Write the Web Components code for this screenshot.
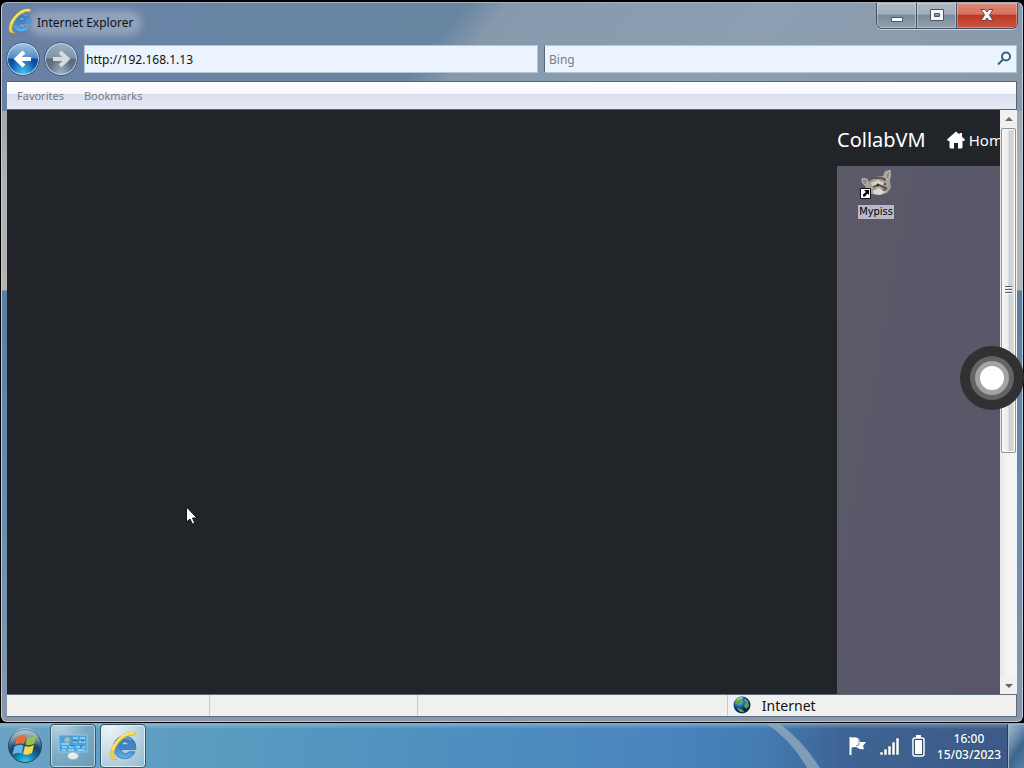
<!DOCTYPE html>
<html lang="en">
<head>
<meta charset="utf-8">
<title>Internet Explorer</title>
<style>
  html, body { height: 100%; margin: 0; }
  body { display: flex; flex-direction: column; overflow: hidden; background: #000; font: 12px/16px "Noto Sans", "Open Sans", sans-serif; color: #111; }
</style>
</head>
<body>

<aero-window>
  <title-bar>Internet Explorer</title-bar>
  <nav-bar url="http://192.168.1.13" engine="Bing"></nav-bar>
  <favorites-bar><a href="#favorites">Favorites</a><a href="#bookmarks">Bookmarks</a></favorites-bar>
  <page-view>
    <collab-page><desktop-shortcut>Mypiss</desktop-shortcut></collab-page>
  </page-view>
  <status-bar>Internet</status-bar>
</aero-window>
<task-bar time="16:00" date="15/03/2023"></task-bar>
<assist-button></assist-button>
<mouse-pointer></mouse-pointer>

<script>
const define = (name, html, setup) => {
  const template = document.createElement('template');
  template.innerHTML = html;
  customElements.define(name, class extends HTMLElement {
    connectedCallback() {
      if (this.shadowRoot) return;
      this.attachShadow({ mode: 'open' }).appendChild(template.content.cloneNode(true));
      if (setup) setup(this, this.shadowRoot);
    }
  });
};

define('ie-logo', `
<style>
  :host { display: block; width: 24px; height: 24px; }
  svg { display: block; width: 100%; height: 100%; }
</style>
<svg viewBox="1 1 26 26" aria-hidden="true">
  <defs><linearGradient id="e" x1="0" y1="0" x2="0" y2="1"><stop offset="0" stop-color="#3d79bd"/><stop offset=".5" stop-color="#4185c9"/><stop offset="1" stop-color="#62b6ec"/></linearGradient></defs>
  <circle cx="15.500" cy="15" r="8" fill="#9cc4e4" opacity=".55"/>
  <path d="M25 17H12.500q.3 3.500 3.500 3.500 2.200 0 3.200-1.500h5.200A9.800 9.800 0 1 1 25 17ZM12.600 13h6.200q-.5-2.600-3-2.600T12.600 13Z" fill="url(#e)" stroke="#3a6da6" stroke-width=".7"/>
  <path d="M9 8.500Q15 5 21 8.500" fill="none" stroke="#a5d1ef" stroke-width="1" opacity=".6"/>
  <path d="M25 2.500C17-.5 6 8.500 3.500 18c-1.600 6 .4 9 5.300 7.500C5 25 5.500 20.500 7.200 16.500 10.500 9 18 3.500 24 4.700Z" fill="#f0d443" stroke="#cdb138" stroke-width=".5"/>
  <path d="M23 2.800C15 2 7 10 5 17" fill="none" stroke="#fff5a0" stroke-width="1"/>
</svg>`);

define('aero-window', `
<style>
  :host {
    flex: 1; min-height: 0; box-sizing: border-box; display: flex; flex-direction: column;
    margin: 2px 1px 1px; padding: 0 5px 4px; border: 1px solid #bccbd8; border-top-color: #a4b1bc; border-radius: 6px;
    background:
      linear-gradient(128deg, #6b7fa5 0, #6885a5 22%, #6885a2 42%, #8799ad 46%, #8c9eb2 70%, #8999aa 100%) 0 0 / 100% 108px no-repeat,
      linear-gradient(#8a97a5 0, #aeb2b5 180px, #b5b4b1 287px, #587d9e 288px, #6a8eaf 520px, #8997a9 100%);
  }
</style>
<slot></slot>`);

define('title-bar', `
<style>
  :host { flex: none; display: flex; height: 39px; }
  .caption { flex: 1; display: flex; align-items: center; height: 40px; gap: 4px; }
  ie-logo { width: 26px; height: 26px; margin-bottom: 4px; }
  .title { padding: 0 4px; margin-left: -4px; border-radius: 8px; background: rgba(255,255,255,.25); box-shadow: 0 0 8px 4px rgba(255,255,255,.3); }
  .controls { display: flex; height: 26px; margin-right: -1px; box-sizing: border-box; border: 1px solid #46525f; border-top: 0; border-radius: 0 0 6px 6px; overflow: hidden; box-shadow: 0 1px 0 #cad3da; }
  button { display: flex; align-items: center; justify-content: center; width: 40px; padding: 0; border: 0; border-right: 1px solid #46525f; background: linear-gradient(#afb9c3 0, #a1adb9 45%, #7a8998 48%, #94a3b0 100%); box-shadow: inset 0 0 0 1px rgba(255,255,255,.3); }
  button.close { width: 60px; border-right: 0; background: linear-gradient(#de8878 0, #d9705f 45%, #bd3724 48%, #cb5541 100%); }
  svg { display: block; width: 16px; height: 14px; margin-bottom: 2px; }
</style>
<div class="caption"><ie-logo></ie-logo><span class="title"><slot></slot></span></div>
<div class="controls">
  <button aria-label="Minimize"><svg viewBox="0 0 16 14"><path d="M2.500 9.500h11v4h-11z" fill="#fff" stroke="#4c5965"/></svg></button>
  <button aria-label="Maximize"><svg viewBox="0 0 16 14"><path d="M1.500 1.500h13v11h-13zM5.500 5.500v3h5v-3z" fill="#f4f6f8" fill-rule="evenodd" stroke="#4c5965"/></svg></button>
  <button class="close" aria-label="Close"><svg viewBox="0 0 16 14"><path d="M2 1.500h4l2 2.500 2-2.500h4L10.500 7l3.500 5.500h-4L8 10l-2 2.500H2L5.500 7z" fill="#f4f6f8" stroke="#624b50"/></svg></button>
</div>`);

define('nav-bar', `
<style>
  :host { flex: none; display: flex; align-items: center; height: 34px; padding-bottom: 5px; }
  .arrows { display: flex; align-items: center; gap: 4px; margin: 0 6px 0 -1px; }
  .arrows button { width: 34px; height: 34px; padding: 0; border: 1px solid #41617d; border-radius: 50%; box-shadow: inset 0 0 0 1px rgba(220,238,250,.75); }
  .back { background: radial-gradient(ellipse at 50% 110%, #52d0fb 0, transparent 55%), linear-gradient(#a7c4e1 0, #4e8bc7 47%, #0b489c 50%, #1267b9 100%); }
  .forward { background: radial-gradient(ellipse at 50% 110%, #a5b8c6 0, transparent 50%), linear-gradient(#9cb0c2 0, #8092a4 47%, #566b80 50%, #6b7d90 100%); }
  svg { display: block; margin: auto; }
  .address, .search { box-sizing: border-box; height: 28px; border: 1px solid #b6c6d5; background: #ebf4fe; }
  .address { flex: 454; min-width: 0; }
  .search { flex: 473; min-width: 0; display: flex; align-items: center; margin-left: 6px; border-left-color: #56687a; }
  input { box-sizing: border-box; width: 100%; height: 26px; min-width: 0; padding: 0 1px; border: 0; outline: 0; background: none; font: inherit; color: #111; }
  .search input { flex: 1; padding-left: 4px; }
  input::placeholder { color: #777e88; opacity: 1; }
  .search button { width: 24px; height: 24px; padding: 0; border: 0; background: none; }
</style>
<div class="arrows">
  <button class="back" aria-label="Back"><svg width="22" height="20" viewBox="0 0 22 20"><path d="M12 3 4.500 10 12 17M5 10h14" fill="none" stroke="#fff" stroke-width="4"/></svg></button>
  <button class="forward" aria-label="Forward"><svg width="22" height="20" viewBox="0 0 22 20"><path d="m10 3 7.500 7-7.500 7M17 10H3" fill="none" stroke="#d8dbde" stroke-width="4"/></svg></button>
</div>
<div class="address"><input class="url" type="text" aria-label="Address"></div>
<div class="search">
  <input class="query" type="text" aria-label="Search">
  <button aria-label="Search"><svg width="16" height="16" viewBox="0 0 16 16"><circle cx="10" cy="5.500" r="4" fill="#f5fbff" stroke="#34657f" stroke-width="2"/><path d="m7 8.500-5 5" stroke="#34657f" stroke-width="2"/></svg></button>
</div>`, (host, root) => {
  root.querySelector('.url').value = host.getAttribute('url');
  root.querySelector('.query').placeholder = host.getAttribute('engine');
});

define('favorites-bar', `
<style>
  :host { flex: none; display: flex; align-items: center; gap: 20px; box-sizing: border-box; height: 29px; padding: 0 10px; border: 1px solid #536576; border-left: 0; background: linear-gradient(#fff 0, #f8f8ff 42%, #dce0ee 46%, #e6e8f5 100%); font-size: 11px; }
  ::slotted(a) { color: #777b84; text-decoration: none; }
</style>
<slot></slot>`);

define('scroll-bar', `
<style>
  :host { flex: none; display: flex; flex-direction: column; width: 17px; background: #f2f2f2; }
  button { flex: none; height: 17px; padding: 0; border: 0; background: #f0f0f0; }
  svg { display: block; margin: auto; }
  .track { flex: 1; display: flex; flex-direction: column; background: linear-gradient(90deg, #e6e6e6, #f4f4f4 40%); }
  .thumb { height: 59%; display: flex; align-items: center; justify-content: center; box-sizing: border-box; margin: 1px 1px 0; border: 1px solid #929292; border-radius: 2px; background: linear-gradient(90deg, #f7f7f7 0, #ececec 45%, #cdcfd0 55%, #dcdedf 100%); box-shadow: inset 0 0 0 1px #fbfbfb; }
</style>
<button aria-label="Scroll up"><svg width="8" height="4"><path d="M0 4 4 0l4 4z" fill="#666"/></svg></button>
<div class="track"><div class="thumb"><svg width="7" height="8"><path d="M0 .5h7m-7 3h7m-7 3h7" stroke="#595959"/><path d="M0 1.500h7m-7 3h7m-7 3h7" stroke="#fff"/></svg></div></div>
<button aria-label="Scroll down"><svg width="8" height="4"><path d="m0 0 4 4 4-4z" fill="#666"/></svg></button>`);

define('page-view', `
<style>
  :host { flex: 1; min-height: 0; display: flex; background: #212529; }
  .page { flex: 1; min-width: 0; display: flex; justify-content: flex-end; overflow: hidden; }
</style>
<div class="page"><slot></slot></div>
<scroll-bar></scroll-bar>`);

define('collab-page', `
<style>
  :host { flex: none; display: flex; flex-direction: column; width: 163px; overflow: hidden; color: #fff; }
  nav { flex: none; display: flex; align-items: center; gap: 21px; box-sizing: border-box; height: 56px; padding-top: 4px; white-space: nowrap; }
  a { color: inherit; text-decoration: none; }
  .brand { font-size: 20px; line-height: 30px; }
  .home { display: flex; align-items: center; gap: 4px; font-size: 15px; line-height: 24px; }
  svg { flex: none; display: block; }
  .screen { flex: 1; min-height: 0; padding: 4px 19px; background: linear-gradient(100deg, #5c5a67, #595869 50%, #5a5567); }
</style>
<nav>
  <a class="brand" href="#collabvm">CollabVM</a>
  <a class="home" href="#home"><svg width="18" height="18" viewBox="0 0 18 18" aria-hidden="true"><path d="M9 .5 0 8.500l1 1.500h1.500v6q0 1.500 1.500 1.500h3V12h4v5.500h3q1.500 0 1.500-1.500v-6H17l1-1.500-3-2.700V2h-2.500v1.600z" fill="#fff"/></svg>Home</a>
</nav>
<div class="screen"><slot></slot></div>`);

define('desktop-shortcut', `
<style>
  :host { display: flex; flex-direction: column; align-items: center; width: 40px; }
  svg { display: block; }
  span { margin-top: 3px; padding: 0 1px; background: #b9b9ca; color: #000; font: 11px/14px "DejaVu Sans Condensed", "DejaVu Sans", sans-serif; }
</style>
<svg width="32" height="32" viewBox="0 0 32 32" aria-hidden="true">
  <path d="M3 10q3-3 6 0l6-3 8-1 2-5 5-1 1 5-1 6 1 7-4 5-7 2-9-1-5-5z" fill="#a4a09a"/>
  <path d="m11 13 7-3 6 3-3 4-8 1z" fill="#d6cfc4"/>
  <path d="m8 11 5-3 8 0 5 2M13 17l6-2 7 3M22 21l5-3" fill="none" stroke="#59564f" stroke-width="2"/>
  <path d="M2 9q4-2 6 2l-2 4Q2 15 2 9ZM25 5l5-5v6l-3 4z" fill="#8f8b85" stroke="#c6c2ba"/>
  <path d="m13 21 6-3 6 4-5 3-6-1z" fill="#dfd9d0"/><circle cx="18" cy="15" r="1.500" fill="#38342f"/><circle cx="25" cy="14" r="1" fill="#38342f"/>
  <path d="M.5 18.500h10v10H.5z" fill="#fff" stroke="#111"/>
  <path d="M3 26.500v-2l3-2.500-2-2h5v5l-1.500-1.500-2.500 3z" fill="#000"/>
</svg>
<span><slot></slot></span>`);

define('status-bar', `
<style>
  :host { flex: none; display: flex; box-sizing: border-box; height: 23px; border: 1px solid #5c6b7d; border-left: 0; background: #f0f0ee; }
  div { box-sizing: border-box; border-right: 1px solid #c9c9c9; }
  .a { flex: 203; } .b { flex: 207; } .c { flex: 310; }
  .zone { flex: 284; display: flex; align-items: center; gap: 11px; padding-left: 5px; border: 0; font-size: 14px; line-height: 20px; }
  svg { display: block; margin-bottom: 2px; }
</style>
<div class="a"></div><div class="b"></div><div class="c"></div>
<div class="zone">
  <svg width="18" height="18" viewBox="0 0 18 18" aria-hidden="true">
    <defs><radialGradient id="g" cx=".35" cy=".3"><stop offset="0" stop-color="#8cd2f5"/><stop offset=".5" stop-color="#2672cb"/><stop offset="1" stop-color="#08245f"/></radialGradient></defs>
    <circle cx="9" cy="9" r="8.500" fill="url(#g)"/>
    <path d="M3 3q4-3 6-2L7 4l2 2-4 3-3-2zM12 7l3-1 1 4-3 3-2-3zM12 2l4 4-2 1-3-2zM4 12l5 1 2 3q-5 1-7-4Z" fill="#56a83f"/>
    <path d="M4 4q3-3 6-2" stroke="#d9f5e7" fill="none"/>
  </svg>
  <span><slot></slot></span>
</div>`);

define('task-bar', `
<style>
  :host {
    flex: none; display: flex; align-items: stretch; box-sizing: border-box; height: 45px; padding-left: 5px; border-top: 1px solid #85a7bd; color: #fff;
    background:
      linear-gradient(rgba(255,255,255,.25), transparent 5px),
      linear-gradient(90deg, #6aa3c4 0, #5799bf 25%, #4d8dc0 48%, #4a84bd 65%, #437bb2 75%, #3e6494 82%, #3c5986 100%);
  }
  button { padding: 0; border: 0; background: none; }
  .start { width: 40px; }
  .tasks { display: flex; gap: 4px; margin-left: 5px; }
  .tasks button { display: flex; align-items: center; justify-content: center; width: 46px; border: 1px solid #31566e; border-radius: 4px; background: radial-gradient(ellipse at 20% 0, #bcd3df 0, #7eacc6 50%, #6798b7 100%); box-shadow: inset 0 0 0 1px rgba(230,243,250,.65); }
  .tasks button.active { background: radial-gradient(ellipse at 20% 0, #eff6f8 0, #bfd6e2 55%, #91b8ce 100%); box-shadow: inset 0 0 0 1px #e1eff6; }
  ie-logo { width: 30px; height: 30px; }
  svg { display: block; margin: auto; }
  .streak { flex: 1; display: flex; justify-content: flex-end; min-width: 0; overflow: hidden; }
  .streak svg { margin: 0 26px 0 0; }
  .tray { display: flex; align-items: center; gap: 12px; }
  .tray svg { margin: 0; }
  .clock { text-align: center; font-size: 12px; line-height: 16px; font-weight: 500; margin-top: 2px; text-shadow: 0 0 2px #27496f; }
  .show { width: 17px; margin-left: 6px; border-left: 1px solid #273f5b; background: linear-gradient(125deg, #a8bccd 0, #6f90b1 35%, #3e658f 60%, #587fa6 100%); box-shadow: inset 1px 1px 0 #9db4c8; }
</style>
<button class="start" aria-label="Start">
  <svg width="36" height="36" viewBox="0 0 36 36">
    <defs>
      <radialGradient id="orb" cx=".5" cy="1" r=".9"><stop offset="0" stop-color="#38d4ee"/><stop offset=".35" stop-color="#147aa9"/><stop offset=".62" stop-color="#174366"/><stop offset="1" stop-color="#819bb0"/></radialGradient>
      <linearGradient id="gloss" x1="0" y1="0" x2="0" y2="1"><stop offset="0" stop-color="#fff" stop-opacity=".7"/><stop offset="1" stop-color="#fff" stop-opacity=".05"/></linearGradient>
    </defs>
    <circle cx="18" cy="18" r="16.500" fill="url(#orb)" stroke="#214d69"/>
    <path d="M3 15A15 15 0 0 1 33 15Q18 20 3 15Z" fill="url(#gloss)" opacity=".55"/>
    <path d="M10 9q5-3 9-1l-2 8q-4-2-9 1z" fill="#ea6b38"/><path d="M20.500 8.500q4 2 9-1l-2 8q-5 3-9 1z" fill="#95c343"/>
    <path d="M7.500 18.500q5-3 9-1l-2 8q-4-2-9 1z" fill="#69b6ea"/><path d="M18 18q4 2 9-1l-2 8q-5 3-9 1z" fill="#fbd64d"/>
  </svg>
</button>
<div class="tasks">
  <button aria-label="Control Panel"><svg width="32" height="30" viewBox="0 0 32 30">
    <path d="M2 4h28v17H2z" fill="#4aa2dd" stroke="#8dcbed"/>
    <circle cx="10" cy="9" r="3" fill="#6eb6e8"/><path d="M10 9V6a3 3 0 0 1 3 3z" fill="#f1ad42"/><circle cx="10" cy="9" r="1.500" fill="#e9b84f"/>
    <path d="M16 7h5m2 0h5M16 11h4m2 0h6M5 16h5m2 0h5m2 0h4m2 0h3M5 19h4m2 0h6m3 0h8M4 13h8" stroke="#a4d9f5" stroke-width="1.500"/>
    <path d="M16 10h4m4 0h3M14 15h3m6 0h3" stroke="#286ea9"/>
    <ellipse cx="16" cy="25" rx="5.500" ry="3.500" fill="#e6ebee" stroke="#9bb2c1" stroke-width=".6"/><path d="M12 25q2-3 5-3" stroke="#fff" fill="none"/>
  </svg></button>
  <button class="active" aria-label="Internet Explorer"><ie-logo></ie-logo></button>
</div>
<div class="streak"><svg width="55" height="44" viewBox="0 0 55 44" aria-hidden="true"><path d="M0 0Q25 17 40 44h13Q36 17 13 0z" fill="#8fa9bb" opacity=".8"/></svg></div>
<div class="tray">
  <svg width="20" height="20" viewBox="0 0 20 20"><path d="M2.500 1v18" stroke="#fff" stroke-width="2"/><path d="M3 2q5-2 8 1 1 1 1 3l6 0-3 4 1 3q-4 1-6-1-3-2-7 0z" fill="#fff"/><path d="M11 3v6l-3 1" fill="none" stroke="#7891aa"/></svg>
  <svg width="20" height="18" viewBox="0 0 20 18"><path d="M0 15h3v3H0zM4 12h3v6H4zM8 9h3v9H8zM12 5h3v13h-3zM16 1h3v17h-3z" fill="#fff" stroke="#2b5277" stroke-width=".5"/></svg>
  <svg width="13" height="22" viewBox="0 0 13 22"><path d="M4 0h5v3H4z" fill="#fff"/><rect x="1" y="3" width="11" height="18" rx="2" fill="#35516d" stroke="#fff" stroke-width="1.500"/><path d="M3 5h7v14H3z" fill="#fff"/></svg>
  <div class="clock"><div class="time"></div><div class="date"></div></div>
</div>
<button class="show" aria-label="Show desktop"></button>`, (host, root) => {
  root.querySelector('.time').textContent = host.getAttribute('time');
  root.querySelector('.date').textContent = host.getAttribute('date');
});

// floats above the window, docked to the right edge
define('assist-button', `
<style>
  :host { position: absolute; right: 0; top: 346px; }
  button { display: flex; align-items: center; justify-content: center; width: 64px; height: 64px; padding: 0; border: 0; border-radius: 50%; background: #303132; }
  span { width: 24px; height: 24px; border-radius: 50%; background: #fff; box-shadow: 0 0 0 5px #a3a3a3, 0 0 0 10px #646464; }
</style>
<button aria-label="Assistive touch"><span></span></button>`);

define('mouse-pointer', `
<style>
  :host { position: absolute; left: 186px; top: 506px; pointer-events: none; }
  svg { display: block; }
</style>
<svg width="12" height="19" viewBox="0 0 12 19"><path d="M.5 1v15l3.500-3 2.300 5 2.500-1-2.300-5H11z" fill="#fff" stroke="#111"/></svg>`);
</script>
</body>
</html>
